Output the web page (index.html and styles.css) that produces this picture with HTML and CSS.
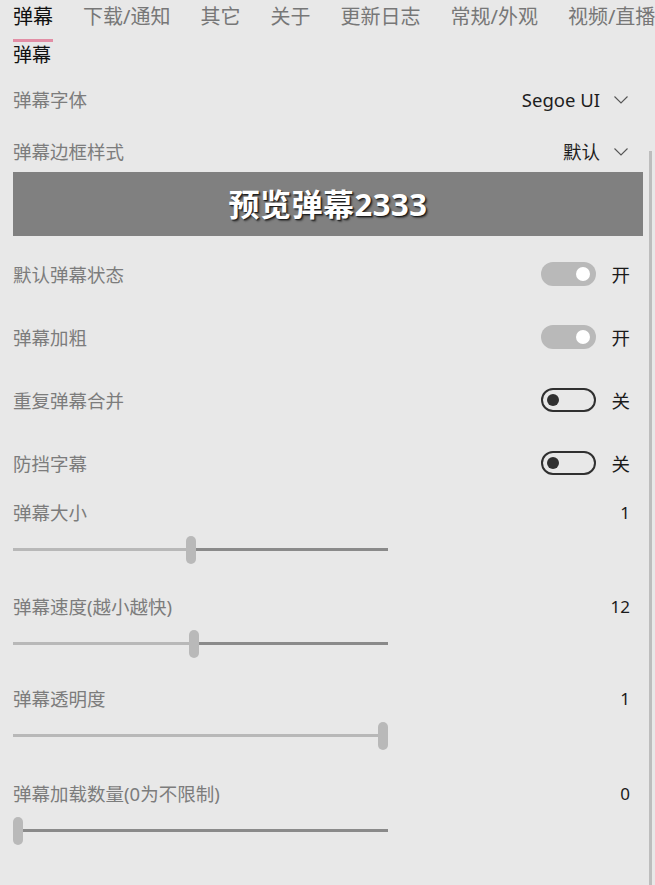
FILE: index.html
```html
<!DOCTYPE html>
<html lang="zh-CN">
<head>
<meta charset="utf-8">
<title>弹幕设置</title>
<link rel="stylesheet" href="styles.css">
</head>
<body>
<div class="page">
  <nav class="tabs">
    <span class="tab active">弹幕</span>
    <span class="tab">下载/通知</span>
    <span class="tab">其它</span>
    <span class="tab">关于</span>
    <span class="tab">更新日志</span>
    <span class="tab">常规/外观</span>
    <span class="tab">视频/直播</span>
  </nav>
  <div class="header">弹幕</div>

  <div class="content">
    <div class="row select-row first">
      <span class="label">弹幕字体</span>
      <span class="select">Segoe UI<svg class="chev" viewBox="0 0 14 8" width="14" height="8"><path d="M0.5 0.5 L7 7 L13.5 0.5" fill="none" stroke="#555" stroke-width="1.1"/></svg></span>
    </div>
    <div class="row select-row">
      <span class="label">弹幕边框样式</span>
      <span class="select">默认<svg class="chev" viewBox="0 0 14 8" width="14" height="8"><path d="M0.5 0.5 L7 7 L13.5 0.5" fill="none" stroke="#555" stroke-width="1.1"/></svg></span>
    </div>
    <div class="preview">预览弹幕2333</div>

    <div class="row toggle-row first-toggle">
      <span class="label">默认弹幕状态</span>
      <span class="toggle-wrap"><span class="toggle on"><span class="knob"></span></span><span class="state">开</span></span>
    </div>
    <div class="row toggle-row">
      <span class="label">弹幕加粗</span>
      <span class="toggle-wrap"><span class="toggle on"><span class="knob"></span></span><span class="state">开</span></span>
    </div>
    <div class="row toggle-row">
      <span class="label">重复弹幕合并</span>
      <span class="toggle-wrap"><span class="toggle off"><span class="knob"></span></span><span class="state">关</span></span>
    </div>
    <div class="row toggle-row">
      <span class="label">防挡字幕</span>
      <span class="toggle-wrap"><span class="toggle off"><span class="knob"></span></span><span class="state">关</span></span>
    </div>

    <div class="slider-group first-slider">
      <div class="slider-head"><span class="label">弹幕大小</span><span class="value">1</span></div>
      <div class="slider"><div class="track"><div class="fill" style="width:calc(5px + 47.4% - 4.74px)"></div><div class="thumb" style="left:calc(5px + 47.4% - 4.74px)"></div></div></div>
    </div>
    <div class="slider-group">
      <div class="slider-head"><span class="label">弹幕速度(越小越快)</span><span class="value">12</span></div>
      <div class="slider"><div class="track"><div class="fill" style="width:calc(5px + 48.2% - 4.82px)"></div><div class="thumb" style="left:calc(5px + 48.2% - 4.82px)"></div></div></div>
    </div>
    <div class="slider-group tight">
      <div class="slider-head"><span class="label">弹幕透明度</span><span class="value">1</span></div>
      <div class="slider"><div class="track"><div class="fill" style="width:calc(100% - 5px)"></div><div class="thumb" style="left:calc(100% - 5px)"></div></div></div>
    </div>
    <div class="slider-group loose">
      <div class="slider-head"><span class="label">弹幕加载数量(0为不限制)</span><span class="value">0</span></div>
      <div class="slider"><div class="track"><div class="fill" style="width:5px"></div><div class="thumb" style="left:5px"></div></div></div>
    </div>
  </div>
  <div class="scrollbar"></div>
</div>
</body>
</html>
```
FILE: styles.css
```css
html, body {
  margin: 0;
  padding: 0;
  background: #e8e8e8;
}
body {
  font-family: "Noto Sans", "Noto Sans CJK SC", sans-serif;
  color: #1a1a1a;
  overflow: hidden;
}
.page {
  position: relative;
  width: 655px;
  height: 885px;
  overflow: hidden;
}
.tabs {
  display: flex;
  gap: 30px;
  padding-left: 13px;
  white-space: nowrap;
  height: 42px;
  overflow: hidden;
}
.tab {
  font-size: 20px;
  line-height: 34px;
  height: 39px;
  color: #777;
  flex: none;
}
.tab.active {
  color: #111;
  border-bottom: 3px solid #e28ea5;
}
.header {
  padding-left: 13px;
  font-size: 19px;
  line-height: 26px;
  height: 26px;
  color: #111;
}
.content {
  padding: 0 12px 0 13px;
  display: flex;
  flex-direction: column;
}
.row {
  display: flex;
  align-items: center;
  justify-content: space-between;
}
.label {
  font-size: 18.5px;
  color: #7c7c7c;
}
.select-row {
  height: 38px;
  margin-top: 14px;
}
.select-row.first {
  margin-top: 12px;
}
.select-row.first + .select-row {
  margin-top: 14px;
  margin-bottom: 2px;
}
.select {
  display: flex;
  align-items: center;
  gap: 14px;
  font-size: 18.5px;
  color: #1e1e1e;
  padding-right: 15px;
}
.chev {
  display: block;
  margin-top: 2px;
}
.preview {
  height: 64px;
  box-sizing: border-box;
  padding-bottom: 4px;
  background: #808080;
  color: #fff;
  font-weight: 700;
  font-size: 31px;
  display: flex;
  align-items: center;
  justify-content: center;
  text-shadow: 1px 1px 1px #1a1a1a, 2px 2px 2px rgba(0,0,0,0.45);
  letter-spacing: 0.5px;
}
.toggle-row {
  height: 40px;
  margin-top: 23px;
}
.first-toggle {
  margin-top: 18px;
}
.toggle-wrap {
  display: flex;
  align-items: center;
  gap: 15px;
  padding-right: 13px;
}
.toggle {
  position: relative;
  width: 55px;
  height: 24px;
  border-radius: 12px;
  box-sizing: border-box;
  display: block;
}
.toggle.on {
  background: #b9b9b9;
}
.toggle.off {
  border: 2px solid #303030;
}
.knob {
  position: absolute;
  border-radius: 50%;
}
.toggle.on .knob {
  width: 14px;
  height: 14px;
  background: #fff;
  right: 6px;
  top: 5px;
}
.toggle.off .knob {
  width: 12px;
  height: 12px;
  background: #303030;
  left: 4px;
  top: 4px;
}
.state {
  font-size: 18.5px;
  color: #1a1a1a;
}
.slider-group {
  display: flex;
  flex-direction: column;
  margin-top: 23px;
}
.first-slider {
  margin-top: 14px;
}
.slider-group.tight {
  margin-top: 21px;
}
.slider-group.loose {
  margin-top: 24px;
}
.slider-head {
  display: flex;
  justify-content: space-between;
  align-items: center;
  height: 30px;
}
.value {
  font-size: 17px;
  color: #1a1a1a;
  padding-right: 13px;
}
.slider {
  width: 375px;
  height: 37px;
  padding-top: 4px;
  display: flex;
  align-items: center;
}
.track {
  position: relative;
  height: 3px;
  background: #8a8a8a;
  flex: 1;
}
.fill {
  position: absolute;
  left: 0;
  top: 0;
  height: 3px;
  background: #b8b8b8;
}
.thumb {
  position: absolute;
  top: 50%;
  width: 10px;
  height: 28px;
  margin-left: -5px;
  margin-top: -14px;
  border-radius: 5px;
  background: #b9b9b9;
}
.scrollbar {
  position: absolute;
  right: 3px;
  top: 151px;
  bottom: 0;
  width: 3px;
  background: #bdbdbd;
}
```
